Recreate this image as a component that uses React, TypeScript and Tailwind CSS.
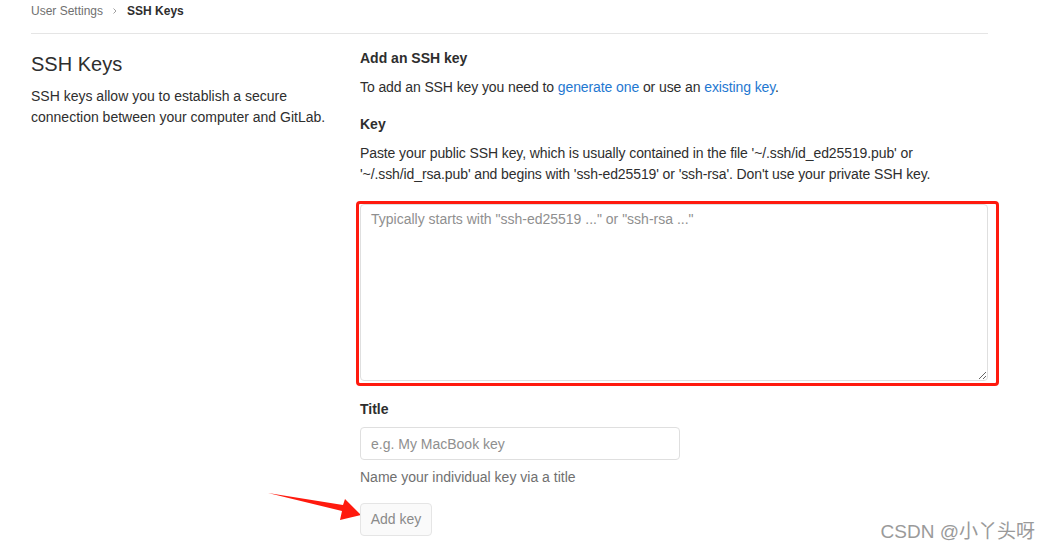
import React from "react";

const font = { fontFamily: '"Liberation Sans", Arial, sans-serif' };

function Breadcrumb() {
  return (
    <div className="flex items-center gap-2 pt-[3px] pb-[14px] border-b border-[#e5e5e5] text-[12px] leading-4">
      <span className="text-[#707070]">User Settings</span>
      <svg width="8" height="8" viewBox="0 0 8 8" className="text-[#a0a0a0]">
        <path d="M2.5 1.5 L5 4 L2.5 6.5" fill="none" stroke="currentColor" strokeWidth="1" />
      </svg>
      <span className="font-bold text-[#2e2e2e]">SSH Keys</span>
    </div>
  );
}

function Arrow() {
  return (
    <svg
      className="absolute left-[-100px] top-[-16px]"
      width="100"
      height="40"
      viewBox="0 0 100 40"
    >
      <polygon
        points="8,6 83,18 85,12 101,28 80,33 82,24"
        fill="#ff1a0e"
      />
    </svg>
  );
}

export default function App() {
  return (
    <div className="relative w-[1050px] h-[551px] bg-white overflow-hidden text-[#2e2e2e]" style={font}>
      <div className="ml-[31px] w-[957px]">
        <Breadcrumb />
        <div className="flex">
          <div className="w-[329px] pt-[16px]">
            <h2 className="text-[20px] leading-7 text-[#2e2e2e]">SSH Keys</h2>
            <p className="mt-[8px] text-[14px] leading-[21px] w-[300px]">
              SSH keys allow you to establish a secure connection between your computer and GitLab.
            </p>
          </div>
          <div className="flex-1 pt-[14px] text-[14px]">
            <h4 className="font-bold leading-5">Add an SSH key</h4>
            <p className="mt-[9px] leading-5 tracking-[-0.1px]">
              To add an SSH key you need to{" "}
              <a className="text-[#1f78d1]">generate one</a> or use an{" "}
              <a className="text-[#1f78d1]">existing key</a>.
            </p>
            <label className="block mt-[17px] font-bold leading-5">Key</label>
            <p className="mt-[9px] leading-[21px] tracking-[-0.1px]">
              Paste your public SSH key, which is usually contained in the file '~/.ssh/id_ed25519.pub' or
              '~/.ssh/id_rsa.pub' and begins with 'ssh-ed25519' or 'ssh-rsa'. Don't use your private SSH key.
            </p>
            <div className="relative mt-[19px]">
              <textarea
                className="block w-full h-[177px] border border-[#dfdfdf] rounded-[4px] px-[10px] py-[4px] text-[14px] leading-5 placeholder:text-[#8f8f8f] outline-none"
                style={font}
                placeholder={'Typically starts with "ssh-ed25519 ..." or "ssh-rsa ..."'}
              />
              <div className="pointer-events-none absolute left-[-4px] top-[-3px] right-[-11px] bottom-[-5px] border-[3px] border-[#ff1a0e] rounded-[4px]" />
            </div>
            <label className="block mt-[18px] font-bold leading-5">Title</label>
            <input
              className="block mt-[8px] w-[320px] h-[33px] border border-[#dfdfdf] rounded-[4px] px-[10px] text-[14px] placeholder:text-[#8f8f8f] outline-none"
              style={font}
              placeholder="e.g. My MacBook key"
            />
            <p className="mt-[7px] leading-5 text-[#707070]">Name your individual key via a title</p>
            <div className="relative mt-[16px]">
              <Arrow />
              <button
                className="w-[72px] h-[33px] border border-[#e5e5e5] rounded-[4px] bg-[#fafafa] text-[#8a8a8a] text-[14px]"
                style={font}
              >
                Add key
              </button>
            </div>
          </div>
        </div>
      </div>
      <div
        className="absolute right-[15px] bottom-[7px] text-[19px] leading-6 text-[#9a9a9a]"
        style={{ fontFamily: '"Liberation Sans", "Noto Sans CJK SC", sans-serif', textShadow: "0 0 1px #fff" }}
      >
        CSDN @小丫头呀
      </div>
    </div>
  );
}
